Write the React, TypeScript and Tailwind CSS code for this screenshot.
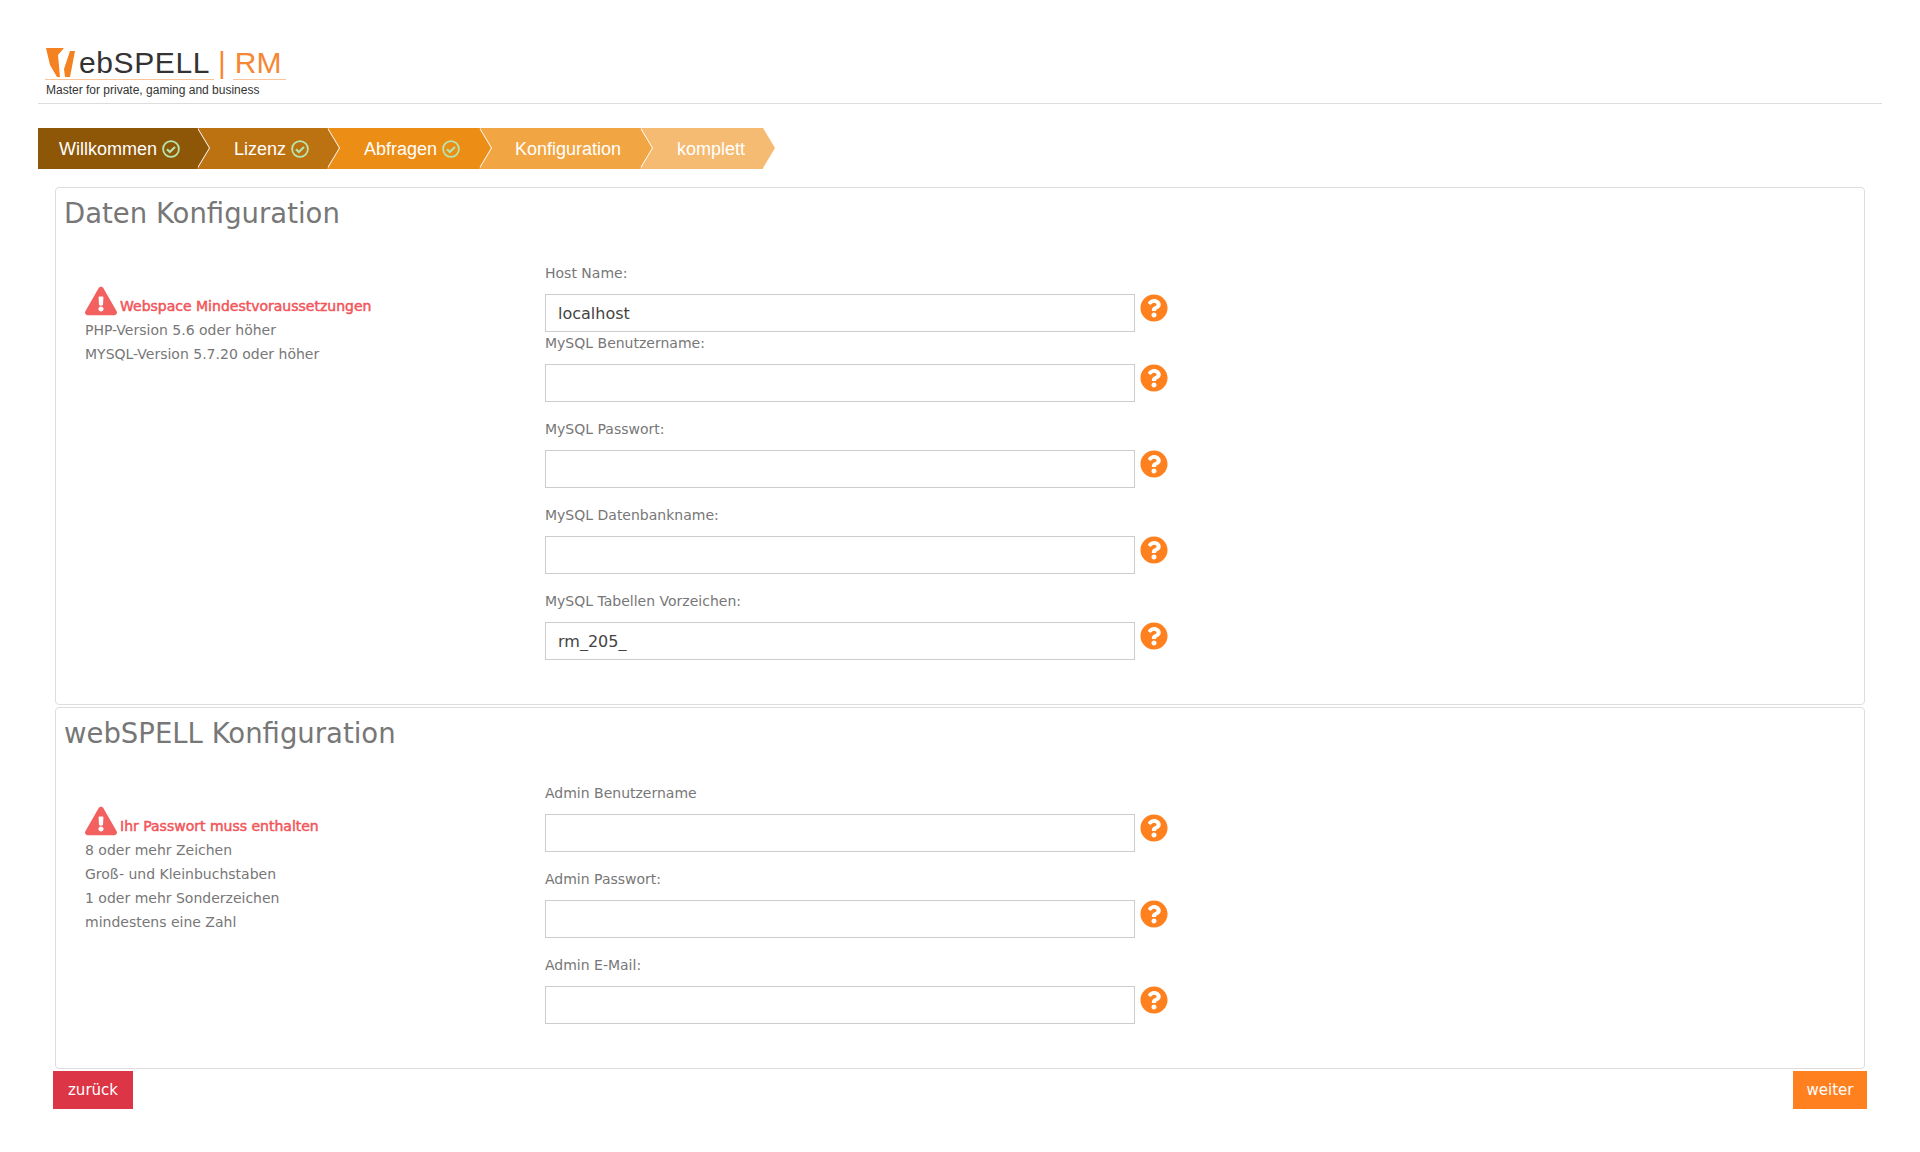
import React from "react";
import { FaExclamationTriangle, FaQuestionCircle } from "react-icons/fa";

const steps = [
  { label: "Willkommen", w: "w-[159px]", pl: "pl-[21px]", bg: "bg-[#8e5708]", tip: "border-l-[#8e5708]", check: true, z: "z-50" },
  { label: "Lizenz", w: "w-[130px]", pl: "pl-[37px]", bg: "bg-[#bd7211]", tip: "border-l-[#bd7211]", check: true, z: "z-40" },
  { label: "Abfragen", w: "w-[152px]", pl: "pl-[37px]", bg: "bg-[#ec8d16]", tip: "border-l-[#ec8d16]", check: true, z: "z-30" },
  { label: "Konfiguration", w: "w-[161px]", pl: "pl-[36px]", bg: "bg-[#f2a643]", tip: "border-l-[#f2a643]", check: false, z: "z-20" },
  { label: "komplett", w: "w-[123px]", pl: "pl-[37px]", bg: "bg-[#f6bb72]", tip: "border-l-[#f6bb72]", check: false, z: "z-10" },
];

function Check() {
  return (
    <svg viewBox="0 0 18 18" className="ml-[5px] h-[18px] w-[18px]" fill="none" stroke="#b4e6ae">
      <circle cx="9" cy="9" r="7.9" strokeWidth="1.8" />
      <path d="M5 9.3l2.8 2.8 5.2-5.2" strokeWidth="2.1" />
    </svg>
  );
}

function Field({ label, value = "", mb = "mb-[17px]" }: { label: string; value?: string; mb?: string }) {
  return (
    <div className={mb}>
      <div className="h-[31px] text-[14px] leading-[21px] text-[#777]">{label}</div>
      <div className="flex items-start gap-[5px]">
        <input
          readOnly
          value={value}
          className="h-[38px] w-[590px] border border-[#ccc] bg-white px-[12px] text-[16px] text-[#444] outline-none"
        />
        <FaQuestionCircle className="h-[28px] w-[28px] text-[#ff801e]" />
      </div>
    </div>
  );
}

function Notice({ title, lines }: { title: string; lines: string[] }) {
  return (
    <div className="w-[481px] pl-[21px] pt-[34px] text-[14px] leading-[24px] text-[#777]">
      <div className="flex h-[36px] items-end pb-[2px]">
        <FaExclamationTriangle className="h-[30px] w-[32px] text-[#f2605f]" />
        <span className="ml-[3px] leading-[20px] text-[#f2555a] [-webkit-text-stroke:0.5px_#f2555a]">{title}</span>
      </div>
      {lines.map((l) => (
        <div key={l}>{l}</div>
      ))}
    </div>
  );
}

function Card({ title, lines, notice, children, h }: { title: string; notice: string; lines: string[]; children: React.ReactNode; h: string }) {
  return (
    <section className={`${h} rounded-[4px] border border-[#ddd] px-[8px]`}>
      <h2 className="h-[60px] pt-[5px] text-[27.5px] leading-[40px] text-[#777]">{title}</h2>
      <div className="flex">
        <Notice title={notice} lines={lines} />
        <div className="pt-[15px]">{children}</div>
      </div>
    </section>
  );
}

export default function App() {
  return (
    <div className="h-[1152px] overflow-hidden bg-white font-['DejaVu_Sans',sans-serif]">
      <div className="mx-[38px] h-[104px] border-b border-[#ddd] pt-[45px] font-['Liberation_Sans',sans-serif]">
        <div className="relative ml-[7px] flex h-[34px] w-[241px] items-end">
          <svg width="32" height="32" viewBox="0 0 32 32" className="shrink-0">
            <path fill="#f58220" d="M1 1h18l-6 7 2 22h-3L5 18z" />
            <path fill="#f58220" d="M25 4h5l-5 26h-5l-1-8z" />
          </svg>
          <span className="ml-[2px] text-[30px] leading-[32px] tracking-[0.6px] text-[#333]">ebSPELL</span>
          <span className="ml-[8px] text-[30px] leading-[32px] text-[#f58735]">|</span>
          <span className="ml-[9px] text-[30px] leading-[32px] text-[#f58735]">RM</span>
          <span className="absolute bottom-[-1px] left-0 h-[1px] w-[169px] bg-[#f9c49c]" />
          <span className="absolute bottom-[-1px] left-[188px] h-[1px] w-[53px] bg-[#f9c49c]" />
        </div>
        <div className="ml-[8px] mt-[2px] text-[12px] leading-[18px] text-[#333]">Master for private, gaming and business</div>
      </div>

      <ol className="ml-[38px] mt-[24px] flex font-['Liberation_Sans',sans-serif]">
        {steps.map((s) => (
          <li key={s.label} className={`relative flex h-[41px] items-center ${s.w} ${s.pl} ${s.bg} ${s.z} pt-[1px] text-[18px] text-white`}>
            <span>{s.label}</span>
            {s.check && <Check />}
            <span className="absolute left-full top-0 ml-[1px] h-0 w-0 border-y-[20.5px] border-l-[12.5px] border-y-transparent border-l-white" />
            <span className={`absolute left-full top-0 h-0 w-0 border-y-[20.5px] border-l-[12.5px] border-y-transparent ${s.tip}`} />
          </li>
        ))}
      </ol>

      <main className="mx-[55px] mt-[18px] flex flex-col gap-[2px]">
        <Card
          title="Daten Konfiguration"
          notice="Webspace Mindestvoraussetzungen"
          lines={["PHP-Version 5.6 oder höher", "MYSQL-Version 5.7.20 oder höher"]}
          h="h-[518px]"
        >
          <Field label="Host Name:" value="localhost" mb="mb-[1px]" />
          <Field label="MySQL Benutzername:" />
          <Field label="MySQL Passwort:" />
          <Field label="MySQL Datenbankname:" />
          <Field label="MySQL Tabellen Vorzeichen:" value="rm_205_" />
        </Card>
        <Card
          title="webSPELL Konfiguration"
          notice="Ihr Passwort muss enthalten"
          lines={["8 oder mehr Zeichen", "Groß- und Kleinbuchstaben", "1 oder mehr Sonderzeichen", "mindestens eine Zahl"]}
          h="h-[362px]"
        >
          <Field label="Admin Benutzername" />
          <Field label="Admin Passwort:" />
          <Field label="Admin E-Mail:" />
        </Card>
      </main>

      <div className="mx-[53px] mt-[2px] flex justify-between text-[15px] text-white">
        <button className="h-[38px] w-[80px] bg-[#dc3545]">zurück</button>
        <button className="h-[38px] w-[74px] bg-[#ff801e]">weiter</button>
      </div>
    </div>
  );
}
